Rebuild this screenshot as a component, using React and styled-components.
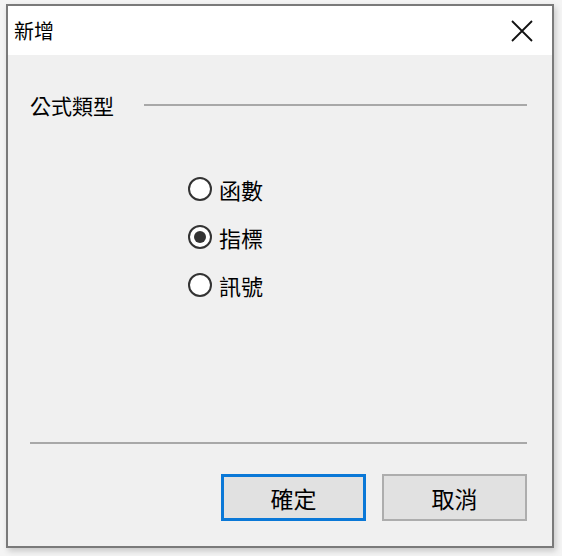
import React, { useState } from "react";
import styled, { createGlobalStyle } from "styled-components";

const GlobalStyle = createGlobalStyle`
    html, body {
        margin: 0;
        padding: 0;
        background: #f4f4f4;
    }
    body {
        font-family: "Noto Sans CJK TC", "Noto Sans", sans-serif;
        color: #000;
    }
`;

const Page = styled.div`
    width: 562px;
    height: 556px;
    padding: 4px 0 0 6px;
    box-sizing: border-box;
`;

const Window = styled.div`
    width: 548px;
    height: 544px;
    box-sizing: border-box;
    border: 2px solid #7a7a7a;
    background: #f0f0f0;
    box-shadow: 2px 3px 6px rgba(0, 0, 0, 0.18);
    display: flex;
    flex-direction: column;
`;

const TitleBar = styled.div`
    height: 49px;
    background: #fff;
    display: flex;
    align-items: center;
    justify-content: space-between;
    padding: 0 18px 0 6px;
    font-size: 20px;
`;

const CloseButton = styled.button`
    border: none;
    background: none;
    padding: 0;
    width: 24px;
    height: 24px;
    display: flex;
    align-items: center;
    justify-content: center;
    cursor: pointer;
`;

const Body = styled.div`
    flex: 1;
    display: flex;
    flex-direction: column;
    padding: 0 25px 0 22px;
`;

const GroupHeader = styled.div`
    display: flex;
    align-items: center;
    margin-top: 38px;
    height: 24px;
    font-size: 21px;

    &::after {
        content: "";
        flex: 1;
        height: 2px;
        background: #a8a8a8;
        margin-left: 30px;
    }
`;

const RadioList = styled.div`
    display: flex;
    flex-direction: column;
    gap: 24px;
    margin: 60px 0 0 158px;
`;

const RadioRow = styled.label`
    display: flex;
    align-items: center;
    gap: 7px;
    height: 24px;
    font-size: 22px;
    cursor: pointer;
`;

const RadioCircle = styled.span`
    width: 24px;
    height: 24px;
    box-sizing: border-box;
    border-radius: 50%;
    border: 2px solid #333;
    background: #fff;
    display: flex;
    align-items: center;
    justify-content: center;

    &::after {
        content: "";
        width: 12px;
        height: 12px;
        border-radius: 50%;
        background: #333;
        display: ${(p) => (p.checked ? "block" : "none")};
    }
`;

const Separator = styled.div`
    margin-top: auto;
    height: 2px;
    background: #a8a8a8;
`;

const Footer = styled.div`
    display: flex;
    justify-content: flex-end;
    gap: 16px;
    margin: 30px 0 25px;
`;

const Button = styled.button`
    width: 145px;
    height: 47px;
    box-sizing: border-box;
    font-family: inherit;
    font-size: 23px;
    color: #000;
    background: #e1e1e1;
    border: ${(p) => (p.primary ? "3px solid #0a78d7" : "2px solid #adadad")};
    padding: 0;
    cursor: pointer;
`;

const options = ["函數", "指標", "訊號"];

const App = () => {
    const [selected, setSelected] = useState("指標");

    return (
        <Page>
            <GlobalStyle />
            <Window>
                <TitleBar>
                    <span>新增</span>
                    <CloseButton aria-label="關閉">
                        <svg width="22" height="22" viewBox="0 0 22 22">
                            <path
                                d="M1 1 L21 21 M21 1 L1 21"
                                stroke="#111"
                                strokeWidth="1.8"
                                fill="none"
                            />
                        </svg>
                    </CloseButton>
                </TitleBar>
                <Body>
                    <GroupHeader>公式類型</GroupHeader>
                    <RadioList>
                        {options.map((o) => (
                            <RadioRow key={o} onClick={() => setSelected(o)}>
                                <RadioCircle checked={selected === o} />
                                {o}
                            </RadioRow>
                        ))}
                    </RadioList>
                    <Separator />
                    <Footer>
                        <Button primary>確定</Button>
                        <Button>取消</Button>
                    </Footer>
                </Body>
            </Window>
        </Page>
    );
};

export default App;
